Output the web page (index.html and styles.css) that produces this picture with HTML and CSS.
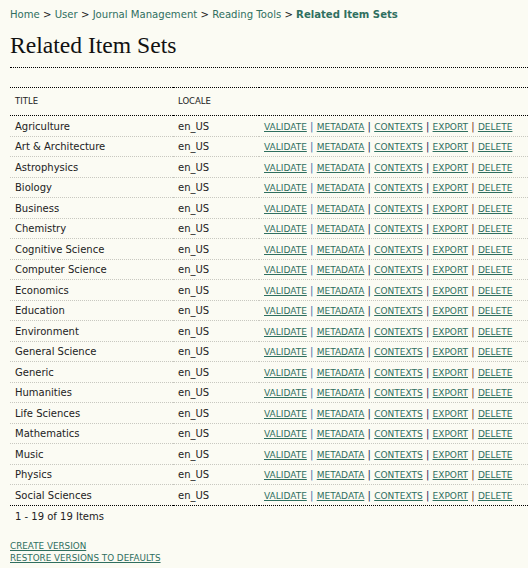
FILE: index.html
```html
<!DOCTYPE html>
<html>
<head>
<meta charset="utf-8">
<link rel="stylesheet" href="styles.css">
</head>
<body>
<div class="page">
  <div class="breadcrumb">
    <a href="#">Home</a> <span class="sep">&gt;</span> <a href="#">User</a> <span class="sep">&gt;</span> <a href="#">Journal Management</a> <span class="sep">&gt;</span> <a href="#">Reading Tools</a> <span class="sep">&gt;</span> <a href="#" class="current">Related Item Sets</a>
  </div>
  <h2 class="title">Related Item Sets</h2>
  <div class="rule-gap"></div>
  <table class="listing">
    <thead>
      <tr class="heading"><td class="c-title">Title</td><td class="c-locale">Locale</td><td class="c-actions"></td></tr>
    </thead>
    <tbody id="rows"></tbody>
  </table>
  <div class="count">1 - 19 of 19 Items</div>
  <div class="bottom-actions">
    <a href="#" class="action">Create Version</a><br>
    <a href="#" class="action">Restore Versions to Defaults</a>
  </div>
</div>
<script src="script.js"></script>
</body>
</html>
```
FILE: script.js
```js
var names = ["Agriculture","Art & Architecture","Astrophysics","Biology","Business","Chemistry","Cognitive Science","Computer Science","Economics","Education","Environment","General Science","Generic","Humanities","Life Sciences","Mathematics","Music","Physics","Social Sciences"];
var tb = document.getElementById("rows");
names.forEach(function (n, i) {
  var tr = document.createElement("tr");
  if (i === names.length - 1) tr.className = "last";
  var t = document.createElement("td"); t.className = "c-title"; t.textContent = n;
  var l = document.createElement("td"); l.className = "c-locale"; l.textContent = "en_US";
  var a = document.createElement("td"); a.className = "c-actions";
  a.innerHTML = '<a href="#" class="action">Validate</a><span class="bar b1">|</span><a href="#" class="action">Metadata</a><span class="bar b2">|</span><a href="#" class="action">Contexts</a><span class="bar b3">|</span><a href="#" class="action">Export</a><span class="bar b4">|</span><a href="#" class="action">Delete</a>';
  tr.appendChild(t); tr.appendChild(l); tr.appendChild(a);
  tb.appendChild(tr);
});
```
FILE: styles.css
```css
html, body {
  margin: 0;
  padding: 0;
  background: #fbfbf3;
}
body {
  font-family: "DejaVu Sans", Verdana, sans-serif;
  font-size: 10px;
  color: #222;
  overflow: hidden;
}
.page {
  padding: 8px 0 0 10px;
}
a {
  color: #2f6f5f;
  text-decoration: none;
}
.breadcrumb {
  line-height: 13px;
  font-size: 10.1px;
}
.breadcrumb .sep {
  color: #222;
}
.breadcrumb .current {
  font-weight: bold;
}
.title {
  font-family: "Liberation Serif", Georgia, serif;
  font-weight: normal;
  font-size: 23.6px;
  line-height: 26px;
  margin: 11px 0 9px 0;
  color: #111;
}
.rule-gap {
  border-top: 1px dotted #000;
  height: 19px;
}
.listing {
  border-collapse: separate;
  border-spacing: 0;
  width: 530px;
}
.listing td {
  padding: 0 5px;
  vertical-align: middle;
  white-space: nowrap;
}
.c-title { width: 153px; }
.c-locale { width: 76px; }
.heading td {
  border-top: 1px dotted #000;
  border-bottom: 1px dotted #000;
  height: 25px;
  padding-bottom: 2px;
  font-size: 8.5px;
  text-transform: uppercase;
}
.listing tbody td {
  height: 18.5px;
  padding-top: 1px;
  border-bottom: 1px dotted #c8c8c0;
}
.listing tbody tr.last td {
  border-bottom: 1px dotted #000;
}
.action {
  font-size: 9px;
  text-transform: uppercase;
  text-decoration: underline;
}
.bar {
  color: #224;
  margin: 0 3.25px;
}
.b1 { color: #3a6fa8; }
.b2 { color: #1a1a5a; }
.b3 { color: #1a1a5a; }
.b4 { color: #7a2a1a; }
.count {
  padding: 4px 5px 0 5px;
  line-height: 13px;
}
.bottom-actions {
  margin-top: 17px;
  line-height: 11px;
}
.bottom-actions .action {
  font-size: 8.8px;
}
```
